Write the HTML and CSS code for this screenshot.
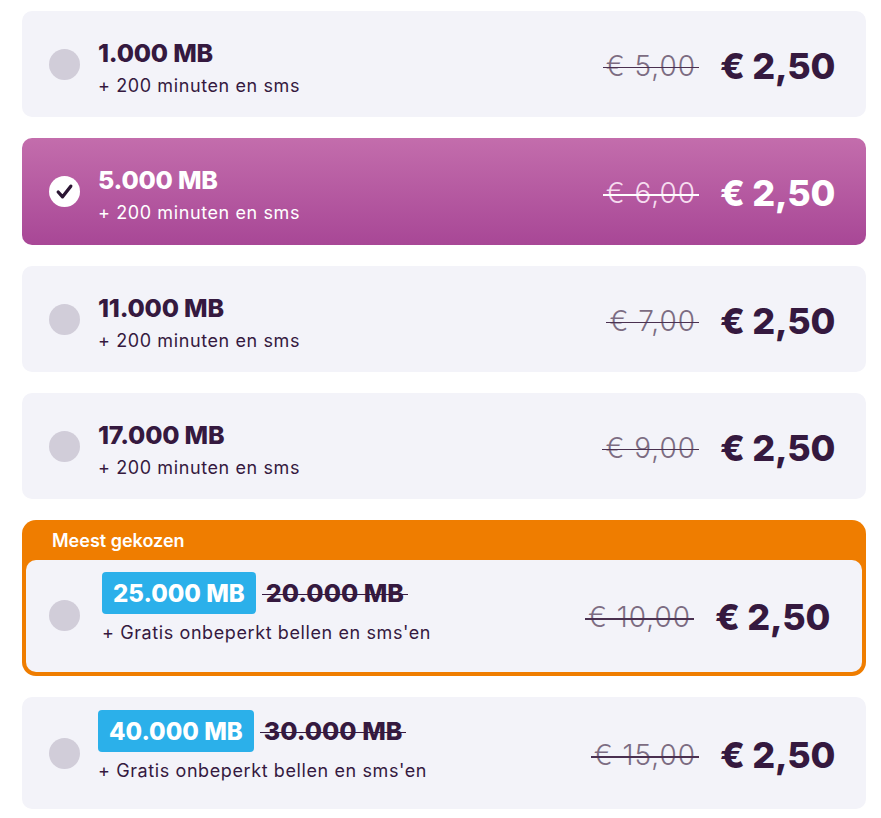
FILE: index.html
```html
<!DOCTYPE html>
<html>
<head>
<meta charset="utf-8">
<link rel="stylesheet" href="styles.css">
</head>
<body>
<div class="list">
  <div class="card">
    <span class="radio"></span>
    <div class="info">
      <div class="title">1.000 MB</div>
      <div class="sub">+ 200 minuten en sms</div>
    </div>
    <div class="prices"><span class="old">€ 5,00</span><span class="new">€ 2,50</span></div>
  </div>
  <div class="card selected">
    <span class="radio checked"><svg viewBox="0 0 32 32" width="32" height="32"><circle cx="16" cy="16" r="16" fill="#fff"/><path d="M9.5 16.5 L14 21.5 L22.5 10.5" fill="none" stroke="#2b1633" stroke-width="3.4" stroke-linecap="round" stroke-linejoin="round"/></svg></span>
    <div class="info">
      <div class="title">5.000 MB</div>
      <div class="sub">+ 200 minuten en sms</div>
    </div>
    <div class="prices"><span class="old">€ 6,00</span><span class="new">€ 2,50</span></div>
  </div>
  <div class="card">
    <span class="radio"></span>
    <div class="info">
      <div class="title">11.000 MB</div>
      <div class="sub">+ 200 minuten en sms</div>
    </div>
    <div class="prices"><span class="old">€ 7,00</span><span class="new">€ 2,50</span></div>
  </div>
  <div class="card">
    <span class="radio"></span>
    <div class="info">
      <div class="title">17.000 MB</div>
      <div class="sub">+ 200 minuten en sms</div>
    </div>
    <div class="prices"><span class="old">€ 9,00</span><span class="new">€ 2,50</span></div>
  </div>
  <div class="featured">
    <div class="feat-label">Meest gekozen</div>
    <div class="card inner">
      <span class="radio"></span>
      <div class="info">
        <div class="title-row"><span class="badge">25.000 MB</span><span class="struck">20.000 MB</span></div>
        <div class="sub">+ Gratis onbeperkt bellen en sms'en</div>
      </div>
      <div class="prices"><span class="old">€ 10,00</span><span class="new">€ 2,50</span></div>
    </div>
  </div>
  <div class="card tall">
    <span class="radio"></span>
    <div class="info">
      <div class="title-row"><span class="badge">40.000 MB</span><span class="struck">30.000 MB</span></div>
      <div class="sub">+ Gratis onbeperkt bellen en sms'en</div>
    </div>
    <div class="prices"><span class="old">€ 15,00</span><span class="new">€ 2,50</span></div>
  </div>
</div>
</body>
</html>
```

FILE: styles.css
```css
* { box-sizing: border-box; }
body {
  margin: 0;
  background: #ffffff;
  font-family: Inter, Lato, "Noto Sans", sans-serif;
  color: #35193f;
}
.list {
  display: flex;
  flex-direction: column;
  gap: 21px;
  padding: 11px 15px 8px 22px;
}
.card {
  display: flex;
  align-items: center;
  height: 106px;
  padding: 0 31px 0 27px;
  background: #f3f3f9;
  border-radius: 10px;
}
.card.selected {
  height: 107px;
  background: linear-gradient(180deg, #c36dac 0%, #a84796 100%);
  color: #ffffff;
}
.radio {
  width: 31px;
  height: 31px;
  border-radius: 50%;
  background: #d1cdd9;
  flex: none;
  display: flex;
}
.radio.checked { background: transparent; }
.radio svg { width: 31px; height: 31px; }
.info {
  margin-left: 18px;
  flex: 1;
  display: flex;
  flex-direction: column;
  gap: 8px;
  margin-top: 7px;
}
.title {
  font-size: 25px;
  font-weight: 800;
  line-height: 28px;
  letter-spacing: -0.2px;
}
.sub {
  font-size: 18px;
  line-height: 22px;
  letter-spacing: 0.6px;
}
.prices {
  display: flex;
  align-items: center;
  gap: 24px;
  margin-top: 3px;
}
.old {
  font-size: 28px;
  font-weight: 300;
  color: #7c6c82;
  position: relative;
  letter-spacing: 1px;
}
.old::after {
  content: "";
  position: absolute;
  left: -3px;
  right: -3px;
  top: 53%;
  height: 1.5px;
  background: #4a3050;
}
.selected .old { color: #f6dcef; }
.selected .old::after { background: #ffffff; }
.new {
  font-size: 36px;
  font-weight: 800;
  letter-spacing: -0.3px;
}
.featured {
  background: #ef7d00;
  border-radius: 14px;
  padding: 0 4px 4px 4px;
}
.feat-label {
  height: 40px;
  display: flex;
  align-items: center;
  padding-left: 26px;
  color: #ffffff;
  font-size: 18px;
  font-weight: 600;
}
.card.inner {
  height: 112px;
  padding: 12px 32px 0 23px;
  align-items: flex-start;
  border-radius: 10px;
}
.card.tall {
  height: 112px;
  padding-top: 13px;
  align-items: flex-start;
}
.inner .radio, .tall .radio { margin-top: 28px; }
.inner .prices, .tall .prices { margin-top: 23px; }
.card.inner .info { margin-left: 22px; margin-top: 0; gap: 8px; }
.card.tall .info { margin-top: 0; gap: 8px; }
.title-row {
  display: flex;
  align-items: center;
  gap: 10px;
}
.badge {
  background: #2bb0ea;
  color: #ffffff;
  font-size: 24px;
  font-weight: 800;
  height: 42px;
  display: flex;
  align-items: center;
  padding: 0 11px;
  border-radius: 4px;
}
.struck {
  font-size: 25px;
  font-weight: 800;
  position: relative;
}
.struck::after {
  content: "";
  position: absolute;
  left: -4px;
  right: -4px;
  top: 52%;
  height: 1.5px;
  background: #35193f;
}
```
